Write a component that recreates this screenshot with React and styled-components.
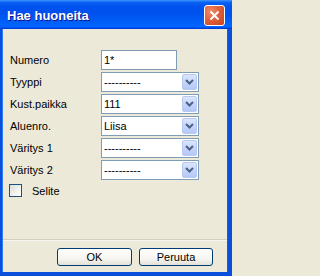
import React from "react";
import styled, { createGlobalStyle } from "styled-components";

const Global = createGlobalStyle`
  html, body { margin: 0; padding: 0; background: #ece9d8; }
  body { font-family: "Liberation Sans", Arial, sans-serif; }
`;

const Window = styled.div`
  width: 232px;
  height: 276px;
  display: flex;
  flex-direction: column;
  background: #0a4fdc;
  box-sizing: border-box;
  overflow: hidden;
`;

const TitleBar = styled.div`
  height: 29px;
  flex: none;
  display: flex;
  align-items: center;
  justify-content: space-between;
  padding: 1px 7px 0 7px;
  box-sizing: border-box;
  background: linear-gradient(
    180deg,
    #3d95ff 0%,
    #0a62f2 8%,
    #0053ee 22%,
    #0050ee 45%,
    #0061f8 80%,
    #0066ff 90%,
    #005bff 94%,
    #003dd7 97%,
    #003dd7 100%
  );
`;

const Title = styled.span`
  font-family: "Liberation Sans", Arial, sans-serif;
  font-weight: bold;
  font-size: 13px;
  color: #fff;
  text-shadow: 1px 1px #0f1089;
`;

const CloseButton = styled.div`
  width: 21px;
  height: 21px;
  box-sizing: border-box;
  border: 1px solid #fff;
  border-radius: 3px;
  background: radial-gradient(circle at 30% 30%, #f08c6b 0%, #e2603d 45%, #c6401c 100%);
  display: flex;
  align-items: center;
  justify-content: center;
`;

const Body = styled.div`
  flex: 1;
  display: flex;
  flex-direction: column;
  background: #ece9d8;
  margin: 0 5px 4px 3px;
  padding-top: 21px;
  box-shadow: -1px 0 0 #2f7bf2, 1px 0 0 #1d5fe0;
`;

const Form = styled.div`
  display: grid;
  grid-template-columns: 91px auto;
  row-gap: 2px;
  padding-left: 7px;
  align-items: center;
`;

const Label = styled.div`
  font-size: 11px;
  color: #000;
  line-height: 20px;
`;

const Field = styled.div`
  width: ${(p) => p.$w}px;
  height: 20px;
  box-sizing: border-box;
  border: 1px solid #7f9db9;
  background: #fff;
  display: flex;
  align-items: center;
  padding: 1px 1px 1px 2px;
  font-size: 11px;
  color: #000;
`;

const FieldText = styled.span`
  flex: 1;
  white-space: nowrap;
`;

const DropButton = styled.div`
  width: 15px;
  height: 16px;
  box-sizing: border-box;
  border: 1px solid #b8c9f2;
  border-radius: 2px;
  background: linear-gradient(180deg, #dbe5fc 0%, #c6d5fa 50%, #b4c8f6 100%);
  display: flex;
  align-items: center;
  justify-content: center;
`;

const CheckRow = styled.div`
  display: flex;
  align-items: center;
  gap: 10px;
  margin-top: 4px;
  padding-left: 6px;
  font-size: 11px;
`;

const CheckBox = styled.div`
  width: 13px;
  height: 13px;
  box-sizing: border-box;
  border: 1px solid #1c5180;
  background: linear-gradient(135deg, #dcdcd7 0%, #f2f2ef 60%, #ffffff 100%);
`;

const Spacer = styled.div`
  flex: 1;
`;

const Separator = styled.div`
  height: 1px;
  background: #d2cfc0;
  border-bottom: 1px solid #f6f5ee;
`;

const ButtonRow = styled.div`
  display: flex;
  justify-content: flex-end;
  gap: 7px;
  padding: 7px 14px 6px 0;
`;

const Button = styled.div`
  width: ${(p) => p.$w}px;
  height: 18px;
  box-sizing: border-box;
  border: 1px solid #003c74;
  border-radius: 3px;
  background: linear-gradient(180deg, #ffffff 0%, #f6f5f0 60%, #e3e1d6 100%);
  display: flex;
  align-items: center;
  justify-content: center;
  font-size: 11px;
  color: #000;
`;

const Arrow = () => (
  <svg width="9" height="6" viewBox="0 0 9 6">
    <path d="M1 1 L4.5 4.5 L8 1" fill="none" stroke="#4d6185" strokeWidth="2" />
  </svg>
);

const CloseIcon = () => (
  <svg width="11" height="11" viewBox="0 0 11 11">
    <path d="M1.5 1.5 L9.5 9.5 M9.5 1.5 L1.5 9.5" stroke="#fff" strokeWidth="2" />
  </svg>
);

const Select = ({ value }) => (
  <Field $w={98}>
    <FieldText>{value}</FieldText>
    <DropButton>
      <Arrow />
    </DropButton>
  </Field>
);

const rows = [
  ["Tyyppi", "----------"],
  ["Kust.paikka", "111"],
  ["Aluenro.", "Liisa"],
  ["Väritys 1", "----------"],
  ["Väritys 2", "----------"],
];

export default function App() {
  return (
    <>
      <Global />
      <Window>
        <TitleBar>
          <Title>Hae huoneita</Title>
          <CloseButton>
            <CloseIcon />
          </CloseButton>
        </TitleBar>
        <Body>
          <Form>
            <Label>Numero</Label>
            <Field $w={76}>
              <FieldText>1*</FieldText>
            </Field>
            {rows.map(([l, v]) => (
              <React.Fragment key={l}>
                <Label>{l}</Label>
                <Select value={v} />
              </React.Fragment>
            ))}
          </Form>
          <CheckRow>
            <CheckBox />
            <span>Selite</span>
          </CheckRow>
          <Spacer />
          <Separator />
          <ButtonRow>
            <Button $w={75}>OK</Button>
            <Button $w={74}>Peruuta</Button>
          </ButtonRow>
        </Body>
      </Window>
    </>
  );
}
